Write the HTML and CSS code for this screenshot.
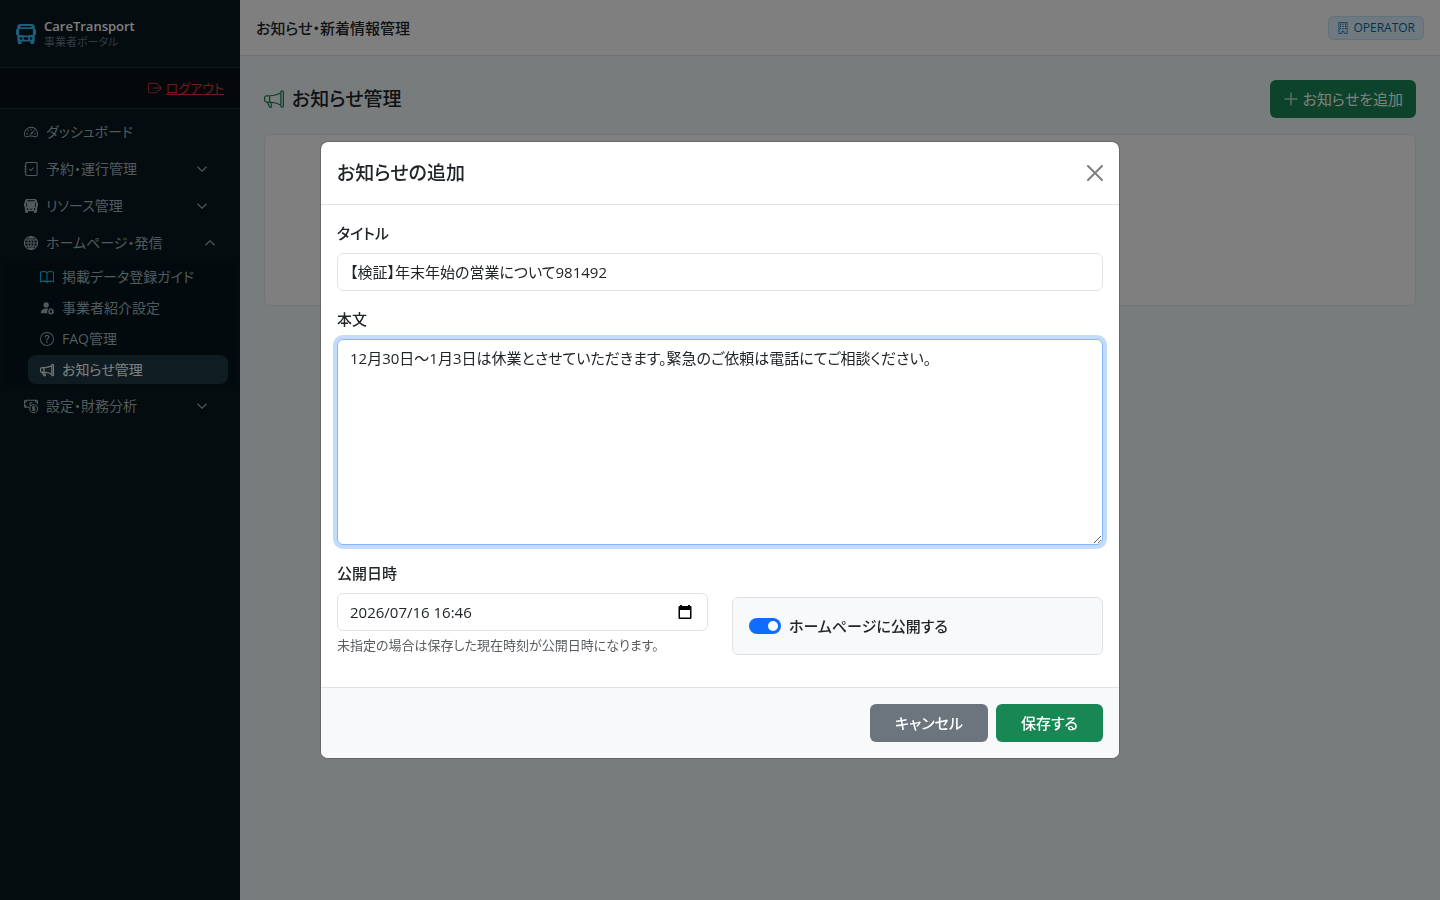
FILE: index.html
```html
<!DOCTYPE html>
<html lang="ja">

<head>
    <meta charset="UTF-8">
    <meta name="viewport" content="width=device-width, initial-scale=1.0">
    <title>お知らせ・新着情報管理 | CareTransport</title>
    <link rel="stylesheet" href="styles.css">
</head>

<body>

    <div class="layout">
        <!-- サイドバー -->
        <aside class="sidebar">
            <div class="brand">
                <svg class="brand-icon" viewBox="0 0 16 16" fill="currentColor"><path fill-rule="evenodd" d="M3.500 0h9A2.500 2.500 0 0 1 15 2.500V4a1 1 0 0 1 1 1v3a1 1 0 0 1-1 1v4c0 .5-.2 1-.5 1.300V15.500a.5.5 0 0 1-.5.5h-2a.5.5 0 0 1-.5-.5V14h-7v1.500a.5.5 0 0 1-.5.5H2a.5.5 0 0 1-.5-.5v-1.200A2 2 0 0 1 1 13V9a1 1 0 0 1-1-1V5a1 1 0 0 1 1-1V2.500A2.500 2.500 0 0 1 3.500 0ZM4 1.500a.5.5 0 0 0 0 1h8a.5.5 0 0 0 0-1ZM3 4a.5.5 0 0 0-.5.5V8.600C4.500 9 6.200 9.100 8 9.100s3.500-.1 5.500-.5V4.500A.5.5 0 0 0 13 4ZM5 11.500a1 1 0 1 0-2 0 1 1 0 0 0 2 0Zm8 0a1 1 0 1 0-2 0 1 1 0 0 0 2 0ZM7 10.500a1 1 0 0 0 0 2h2a1 1 0 1 0 0-2Z"/></svg>
                <div>
                    <div class="brand-name">CareTransport</div>
                    <div class="brand-sub">事業者ポータル</div>
                </div>
            </div>

            <div class="logout">
                <svg class="icon" viewBox="0 0 16 16" fill="currentColor"><path d="M10 12.500a.5.5 0 0 1-.5.5h-8a.5.5 0 0 1-.5-.5v-9a.5.5 0 0 1 .5-.5h8a.5.5 0 0 1 .5.5v2a.5.5 0 0 0 1 0v-2A1.500 1.500 0 0 0 9.500 2h-8A1.500 1.500 0 0 0 0 3.500v9A1.500 1.500 0 0 0 1.500 14h8a1.500 1.500 0 0 0 1.500-1.500v-2a.5.5 0 0 0-1 0z"/><path d="M15.854 8.354a.5.5 0 0 0 0-.708l-3-3a.5.5 0 0 0-.708.708L14.293 7.500H5.500a.5.5 0 0 0 0 1h8.793l-2.147 2.146a.5.5 0 0 0 .708.708z"/></svg>
                <a href="#">ログアウト</a>
            </div>

            <nav class="menu">
                <a class="menu-link" href="#">
                    <svg class="icon" viewBox="0 0 16 16" fill="currentColor"><path d="M8 4a.5.5 0 0 1 .5.5V6a.5.5 0 0 1-1 0V4.500A.5.5 0 0 1 8 4M3.732 5.732a.5.5 0 0 1 .707 0l.915.914a.5.5 0 1 1-.708.708l-.914-.915a.5.5 0 0 1 0-.707M2 10a.5.5 0 0 1 .5-.5h1.586a.5.5 0 0 1 0 1H2.500A.5.5 0 0 1 2 10m9.500 0a.5.5 0 0 1 .5-.5h1.500a.5.5 0 0 1 0 1H12a.5.5 0 0 1-.5-.5m.754-4.246a.39.39 0 0 0-.527-.020L7.547 9.310a.91.91 0 1 0 1.302 1.258l3.434-4.297a.39.39 0 0 0-.029-.518z"/><path fill-rule="evenodd" d="M0 10a8 8 0 1 1 15.547 2.661c-.442 1.253-1.845 1.602-2.932 1.250C11.309 13.488 9.475 13 8 13c-1.474 0-3.310.488-4.615.911-1.087.352-2.490.003-2.932-1.250A8 8 0 0 1 0 10m8-7a7 7 0 0 0-6.603 9.329c.203.575.923.876 1.680.630C4.397 12.533 6.358 12 8 12s3.604.532 4.923.960c.757.245 1.477-.056 1.680-.631A7 7 0 0 0 8 3"/></svg>
                    <span>ダッシュボード</span>
                </a>
                <a class="menu-link" href="#">
                    <svg class="icon line" viewBox="0 0 16 16"><path d="M3.500.5h10a1.500 1.500 0 0 1 1.500 1.500v12a1.500 1.500 0 0 1-1.500 1.500h-10A1.500 1.500 0 0 1 2 14V2A1.500 1.500 0 0 1 3.500.5ZM.5 5h2M.5 8h2M.5 11h2M6 8l1.800 1.800L11 6.500"/></svg>
                    <span>予約・運行管理</span>
                    <svg class="chevron" viewBox="0 0 16 16"><path d="m2 5 6 6 6-6"/></svg>
                </a>
                <a class="menu-link" href="#">
                    <svg class="icon" viewBox="0 0 16 16" fill="currentColor"><path fill-rule="evenodd" d="M3.500 0h9A2.500 2.500 0 0 1 15 2.500V4a1 1 0 0 1 1 1v3a1 1 0 0 1-1 1v4c0 .5-.2 1-.5 1.300v1.200a.5.5 0 0 1-.5.5h-2a.5.5 0 0 1-.5-.5V14h-7v1.500a.5.5 0 0 1-.5.5H2a.5.5 0 0 1-.5-.5v-1.200A2 2 0 0 1 1 13V9a1 1 0 0 1-1-1V5a1 1 0 0 1 1-1V2.500A2.500 2.500 0 0 1 3.500 0ZM4 1.500a.5.5 0 0 0 0 1h8a.5.5 0 0 0 0-1ZM2.500 4v5h.8V4ZM12.700 4v5h.8V4ZM5 11.500a1 1 0 1 0-2 0 1 1 0 0 0 2 0Zm8 0a1 1 0 1 0-2 0 1 1 0 0 0 2 0ZM7 11a.5.5 0 0 0 0 1h2a.5.5 0 1 0 0-1Z"/></svg>
                    <span>リソース管理</span>
                    <svg class="chevron" viewBox="0 0 16 16"><path d="m2 5 6 6 6-6"/></svg>
                </a>
                <a class="menu-link open" href="#">
                    <svg class="icon line" viewBox="0 0 16 16"><path d="M8 .5a7.500 7.500 0 1 0 0 15 7.500 7.500 0 0 0 0-15ZM8 .5v15M.5 8h15M1.500 4.500h13M1.500 11.500h13M8 .5C3.300 4 3.300 12 8 15.500M8 .5c4.700 3.500 4.700 11.500 0 15"/></svg>
                    <span>ホームページ・発信</span>
                    <svg class="chevron" viewBox="0 0 16 16"><path d="m2 11 6-6 6 6"/></svg>
                </a>
                <div class="submenu">
                    <a class="sub-link" href="#">
                        <svg class="icon line guide" viewBox="0 0 16 16"><path d="M8 3v11C6 12.500 3 12.500.5 13.500v-11C3 1.500 6 1.500 8 3c2-1.500 5-1.500 7.500-.5v11C13 12.500 10 12.500 8 14"/></svg>
                        <span>掲載データ登録ガイド</span>
                    </a>
                    <a class="sub-link" href="#">
                        <svg class="icon" viewBox="0 0 16 16" fill="currentColor"><circle cx="7" cy="4.500" r="3"/><path d="M8.500 14H2c-1 0-1-1-1-1 0-1 1-4.500 6-4.500 1 0 1.800.1 2.400.4A4.500 4.500 0 0 0 8.500 14Z"/><circle cx="12.500" cy="12" r="2.200" fill="none" stroke="currentColor" stroke-width="1.500"/><path fill="none" stroke="currentColor" stroke-width="1.300" stroke-dasharray="1.200 1.600" d="M12.500 8.900a3.100 3.100 0 1 1 0 6.200 3.100 3.100 0 0 1 0-6.200Z"/></svg>
                        <span>事業者紹介設定</span>
                    </a>
                    <a class="sub-link" href="#">
                        <svg class="icon" viewBox="0 0 16 16" fill="currentColor"><path d="M8 15A7 7 0 1 1 8 1a7 7 0 0 1 0 14m0 1A8 8 0 1 0 8 0a8 8 0 0 0 0 16"/><path d="M5.255 5.786a.237.237 0 0 0 .241.247h.825c.138 0 .248-.113.266-.250.090-.656.540-1.134 1.342-1.134.686 0 1.314.343 1.314 1.168 0 .635-.374.927-.965 1.371-.673.489-1.206 1.060-1.168 1.987l.003.217a.25.25 0 0 0 .250.246h.811a.25.25 0 0 0 .250-.250v-.105c0-.718.273-.927 1.010-1.486.609-.463 1.244-.977 1.244-2.056 0-1.511-1.276-2.241-2.673-2.241-1.267 0-2.655.590-2.750 2.286m1.557 5.763c0 .533.425.927 1.010.927.609 0 1.028-.394 1.028-.927 0-.552-.420-.940-1.029-.940-.584 0-1.009.388-1.009.940"/></svg>
                        <span>FAQ管理</span>
                    </a>
                    <a class="sub-link active" href="#">
                        <svg class="icon" viewBox="0 0 16 16" fill="currentColor" stroke="currentColor" stroke-width=".3"><path d="M13 2.500a1.500 1.500 0 0 1 3 0v11a1.500 1.500 0 0 1-3 0v-.214c-2.162-1.241-4.490-1.843-6.912-2.083l.405 2.712A1 1 0 0 1 5.510 15.100h-.548a1 1 0 0 1-.916-.599l-1.850-3.490-.202-.003A2.014 2.014 0 0 1 0 9V7a2.020 2.020 0 0 1 1.992-2.013 75 75 0 0 0 2.483-.075c3.043-.154 6.148-.849 8.525-2.199zm1 0v11a.5.5 0 0 0 1 0v-11a.5.5 0 0 0-1 0m-1 1.350c-2.344 1.205-5.209 1.842-8 2.033v4.233q.270.015.537.036c2.568.189 5.093.744 7.463 1.993zm-9 6.215v-4.130a95 95 0 0 1-1.992.052A1.020 1.020 0 0 0 1 7v2c0 .550.448 1.002 1.006 1.009A61 61 0 0 1 4 10.065m-.657.975 1.609 3.037.010.024h.548l-.002-.014-.443-2.966a68 68 0 0 0-1.722-.082z"/></svg>
                        <span>お知らせ管理</span>
                    </a>
                </div>
                <a class="menu-link" href="#">
                    <svg class="icon line" viewBox="0 0 16 16"><path d="M6 9.500H1.500a1 1 0 0 1-1-1v-6a1 1 0 0 1 1-1h13a1 1 0 0 1 1 1V6M.5 4a2.500 2.500 0 0 0 2.500-2.500M.5 7A2.500 2.500 0 0 1 3 9.500M13 1.500A2.500 2.500 0 0 0 15.500 4M8.500 7a1.500 1.500 0 1 1 1-2"/><circle cx="11" cy="11" r="4.500"/><path d="M12.500 9.700c-.3-.6-.8-.8-1.500-.8-1 0-1.500.4-1.500 1s.5.900 1.500 1.100 1.500.5 1.500 1.100-.5 1-1.500 1-1.500-.3-1.600-.9M11 8v6"/></svg>
                    <span>設定・財務分析</span>
                    <svg class="chevron" viewBox="0 0 16 16"><path d="m2 5 6 6 6-6"/></svg>
                </a>
            </nav>
        </aside>

        <!-- メイン -->
        <div class="content">
            <header class="topbar">
                <div class="topbar-title">お知らせ・新着情報管理</div>
                <span class="role-badge">
                    <svg viewBox="0 0 16 16"><path fill="none" stroke="currentColor" d="M2.500.5h11v15h-4v-3h-3v3h-4z"/><path fill="currentColor" d="M4 2h1.500v1.500H4zm3.200 0h1.500v1.500H7.200zm3.300 0H12v1.500h-1.500zM4 5h1.500v1.500H4zm3.200 0h1.500v1.500H7.200zm3.300 0H12v1.500h-1.500zM4 8h1.500v1.500H4zm3.200 0h1.500v1.500H7.200zm3.300 0H12v1.500h-1.500z"/></svg>
                    OPERATOR
                </span>
            </header>

            <main class="page">
                <div class="page-head">
                    <h1>
                        <svg viewBox="0 0 16 16" fill="currentColor"><path d="M13 2.500a1.500 1.500 0 0 1 3 0v11a1.500 1.500 0 0 1-3 0v-.214c-2.162-1.241-4.490-1.843-6.912-2.083l.405 2.712A1 1 0 0 1 5.510 15.100h-.548a1 1 0 0 1-.916-.599l-1.850-3.490-.202-.003A2.014 2.014 0 0 1 0 9V7a2.020 2.020 0 0 1 1.992-2.013 75 75 0 0 0 2.483-.075c3.043-.154 6.148-.849 8.525-2.199zm1 0v11a.5.5 0 0 0 1 0v-11a.5.5 0 0 0-1 0m-1 1.350c-2.344 1.205-5.209 1.842-8 2.033v4.233q.270.015.537.036c2.568.189 5.093.744 7.463 1.993zm-9 6.215v-4.130a95 95 0 0 1-1.992.052A1.020 1.020 0 0 0 1 7v2c0 .550.448 1.002 1.006 1.009A61 61 0 0 1 4 10.065m-.657.975 1.609 3.037.010.024h.548l-.002-.014-.443-2.966a68 68 0 0 0-1.722-.082z"/></svg>
                        お知らせ管理
                    </h1>
                    <button type="button" class="btn btn-success btn-add">
                        <svg viewBox="0 0 16 16"><path d="M8 1.500v13M1.500 8h13"/></svg>
                        お知らせを追加
                    </button>
                </div>
                <div class="list-card"></div>
            </main>
        </div>
    </div>

    <!-- お知らせ追加モーダル -->
    <div class="backdrop">
        <form class="modal" role="dialog" aria-labelledby="modal-title">
            <div class="modal-header">
                <h2 id="modal-title">お知らせの追加</h2>
                <button type="button" class="btn-close" aria-label="閉じる">
                    <svg viewBox="0 0 16 16"><path d="m1 1 14 14M15 1 1 15"/></svg>
                </button>
            </div>

            <div class="modal-body">
                <div class="field">
                    <label for="title">タイトル</label>
                    <input class="control" type="text" id="title" value="【検証】年末年始の営業について981492">
                </div>
                <div class="field">
                    <label for="body">本文</label>
                    <textarea class="control focused" id="body" rows="8">12月30日～1月3日は休業とさせていただきます。緊急のご依頼は電話にてご相談ください。</textarea>
                </div>
                <div class="row">
                    <div class="field">
                        <label for="published">公開日時</label>
                        <div class="control date-control">
                            <input type="text" id="published" value="2026/07/16 16:46">
                            <button type="button" aria-label="日時を選択">
                                <svg viewBox="0 0 16 16"><path fill-rule="evenodd" d="M3 1h2v1h6V1h2v1h.5a1 1 0 0 1 1 1v11a1 1 0 0 1-1 1h-11a1 1 0 0 1-1-1V3a1 1 0 0 1 1-1H3ZM3 6v7.500h10V6Z"/></svg>
                            </button>
                        </div>
                        <div class="hint">未指定の場合は保存した現在時刻が公開日時になります。</div>
                    </div>
                    <div class="switch-box">
                        <input type="checkbox" role="switch" id="is-public" checked>
                        <label for="is-public">ホームページに公開する</label>
                    </div>
                </div>
            </div>

            <div class="modal-footer">
                <button type="button" class="btn btn-secondary">キャンセル</button>
                <button type="submit" class="btn btn-success">保存する</button>
            </div>
        </form>
    </div>

</body>

</html>
```
FILE: styles.css
```css
* {
    margin: 0;
    padding: 0;
    box-sizing: border-box;
}

body {
    font-family: "Open Sans", "Noto Sans CJK JP", sans-serif;
    font-feature-settings: "palt";
    font-size: 15px;
    line-height: 24px;
    color: #212529;
    background-color: #f0f9fa;
}

button,
input,
textarea {
    font: inherit;
    font-feature-settings: inherit;
    color: inherit;
}

svg {
    flex-shrink: 0;
}

.layout {
    display: flex;
    min-height: 100vh;
}

/* サイドバー */
.sidebar {
    width: 240px;
    flex-shrink: 0;
    background-color: #08181e;
    color: #a3b4ba;
    font-size: 14px;
}

.brand {
    display: flex;
    align-items: center;
    gap: 8px;
    height: 68px;
    padding: 0 16px;
    border-bottom: 1px solid #1e313b;
}

.brand-icon {
    width: 20px;
    height: 20px;
    color: #38bdf8;
}

.brand-name {
    font-size: 13px;
    font-weight: 600;
    line-height: 16px;
    color: #fff;
}

.brand-sub {
    font-size: 11px;
    line-height: 16px;
    color: #6c757d;
}

.logout {
    display: flex;
    align-items: center;
    justify-content: flex-end;
    gap: 4px;
    height: 41px;
    padding: 0 16px;
    background-color: #061217;
    border-bottom: 1px solid #1e313b;
    color: #dc3545;
    font-size: 13px;
}

.logout a {
    color: inherit;
}

.icon {
    width: 14px;
    height: 14px;
}

.line,
.chevron {
    fill: none;
    stroke: currentColor;
    stroke-width: 1.2;
}

.menu {
    padding: 4px 12px;
}

.menu-link,
.sub-link {
    display: flex;
    align-items: center;
    gap: 8px;
    color: #a3b4ba;
    text-decoration: none;
}

.menu-link {
    height: 37px;
    padding: 0 20px 0 12px;
}

.menu-link.open {
    padding-right: 12px;
}

.chevron {
    width: 12px;
    height: 12px;
    margin-left: auto;
    stroke-width: 1.5;
}

.submenu {
    display: flex;
    flex-direction: column;
    gap: 2px;
    margin: 0 -8px;
    padding: 1px 8px 3px 24px;
    background-color: #07151b;
}

.sub-link {
    height: 29px;
    padding: 0 12px;
    border-radius: 8px;
}

.sub-link.active {
    background-color: #1e3a46;
    color: #fff;
}

.guide {
    color: #0dcaf0;
}

/* メイン */
.content {
    flex: 1;
    min-width: 0;
}

.topbar {
    display: flex;
    align-items: center;
    justify-content: space-between;
    height: 56px;
    padding: 0 16px;
    background-color: #fff;
    border-bottom: 1px solid #d7e2e6;
}

.topbar-title {
    font-weight: 500;
}

.role-badge {
    display: flex;
    align-items: center;
    gap: 4px;
    padding: 3px 8px;
    border: 1px solid #bae6fd;
    border-radius: 6px;
    background-color: #e0f2fe;
    color: #0369a1;
    font-size: 12px;
    font-weight: 500;
    line-height: 16px;
}

.role-badge svg {
    width: 12px;
    height: 12px;
}

.page {
    padding: 24px;
}

.page-head {
    display: flex;
    align-items: center;
    justify-content: space-between;
    margin-bottom: 16px;
}

h1,
h2 {
    font-size: 19px;
    font-weight: 500;
    line-height: 30px;
}

h1 {
    display: flex;
    align-items: center;
    gap: 8px;
}

h1 svg {
    width: 20px;
    height: 20px;
    color: #198754;
}

.list-card {
    height: 172px;
    background-color: #fff;
    border: 1px solid #dee8eb;
    border-radius: 6px;
}

.btn {
    padding: 6px 24px;
    border: 1px solid transparent;
    border-radius: 6px;
    color: #fff;
    font-weight: 500;
    cursor: pointer;
}

.btn-success {
    background-color: #198754;
}

.btn-secondary {
    background-color: #6c757d;
}

.btn-add {
    display: flex;
    align-items: center;
    gap: 4px;
    padding: 6px 12px;
    font-weight: 400;
}

.btn-add svg {
    width: 16px;
    height: 16px;
    fill: none;
    stroke: currentColor;
}

/* モーダル */
.backdrop {
    position: fixed;
    inset: 0;
    display: flex;
    align-items: center;
    justify-content: center;
    background-color: rgba(0, 0, 0, 0.5);
}

.modal {
    width: 100%;
    max-width: 800px;
    background-color: #fff;
    background-clip: padding-box;
    border: 1px solid rgba(0, 0, 0, 0.175);
    border-radius: 8px;
    overflow: hidden;
}

.modal-header {
    display: flex;
    align-items: center;
    justify-content: space-between;
    padding: 16px;
    border-bottom: 1px solid #dee2e6;
}

.btn-close {
    display: flex;
    padding: 8px;
    margin: -8px;
    border: none;
    background: none;
    opacity: 0.5;
    cursor: pointer;
}

.btn-close svg {
    width: 16px;
    height: 16px;
    fill: none;
    stroke: #000;
    stroke-width: 2;
    stroke-linecap: round;
}

.modal-body {
    display: flex;
    flex-direction: column;
    gap: 16px;
    padding: 16px 16px 32px;
}

.field label {
    display: block;
    margin-bottom: 8px;
    font-weight: 500;
}

.control {
    display: block;
    width: 100%;
    padding: 6px 12px;
    border: 1px solid #dee2e6;
    border-radius: 6px;
    background-color: #fff;
}

textarea.control {
    resize: vertical;
}

.focused,
.control:focus {
    border-color: #86b7fe;
    outline: 0;
    box-shadow: 0 0 0 4px rgba(13, 110, 253, 0.25);
}

.row {
    display: grid;
    grid-template-columns: 1fr 1fr;
    gap: 24px;
    align-items: end;
}

.date-control {
    display: flex;
    align-items: center;
}

.date-control input {
    flex: 1;
    min-width: 0;
    border: none;
    outline: none;
    background: none;
}

.date-control button {
    display: flex;
    padding: 0 2px;
    border: none;
    background: none;
}

.date-control svg {
    width: 16px;
    height: 16px;
}

.hint {
    margin-top: 4px;
    font-size: 13px;
    line-height: 20px;
    color: rgba(33, 37, 41, 0.75);
}

.switch-box {
    display: flex;
    align-items: center;
    gap: 8px;
    padding: 16px;
    border: 1px solid #dee2e6;
    border-radius: 6px;
    background-color: #f8f9fa;
    font-weight: 500;
}

.switch-box input {
    appearance: none;
    display: flex;
    justify-content: flex-end;
    width: 32px;
    height: 16px;
    padding: 3px;
    border-radius: 8px;
    background-color: #adb5bd;
}

.switch-box input::before {
    content: "";
    width: 10px;
    height: 10px;
    border-radius: 50%;
    background-color: #fff;
}

.switch-box input:checked {
    background-color: #0d6efd;
}

.modal-footer {
    display: flex;
    justify-content: flex-end;
    gap: 8px;
    padding: 16px;
    border-top: 1px solid #dee2e6;
    background-color: #f8f9fa;
}
```
